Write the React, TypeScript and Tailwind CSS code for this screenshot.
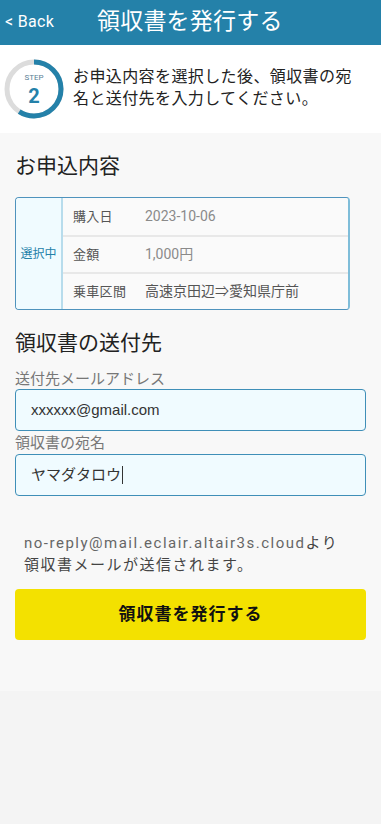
import React from 'react';

const font = { fontFamily: "Roboto, 'Noto Sans CJK JP', sans-serif" };

const rows = [
  { label: '購入日', value: '2023-10-06', dark: false },
  { label: '金額', value: '1,000円', dark: false },
  { label: '乗車区間', value: '高速京田辺⇒愛知県庁前', dark: true },
];

function StepBadge() {
  const r = 27;
  const c = 2 * Math.PI * r;
  return (
    <div className="relative w-[60px] h-[60px] shrink-0">
      <svg width="60" height="60" viewBox="0 0 60 60">
        <circle cx="30" cy="30" r={r} fill="none" stroke="#dcdcdc" strokeWidth="5" />
        <circle
          cx="30"
          cy="30"
          r={r}
          fill="none"
          stroke="#2481a9"
          strokeWidth="5"
          strokeDasharray={`${c * 0.59} ${c}`}
          transform="rotate(-90 30 30)"
        />
      </svg>
      <div className="absolute inset-0 flex flex-col items-center justify-center">
        <span className="text-[8px] leading-none text-[#5a7f95] mt-[2px]">STEP</span>
        <span className="text-[20px] leading-none font-bold text-[#2481a9] mt-[4px]">2</span>
      </div>
    </div>
  );
}

export default function App() {
  return (
    <div className="min-h-[824px] w-[381px] bg-[#f4f4f4]" style={font}>
      {/* Header */}
      <div className="h-[45px] bg-[#2481a9] flex items-center relative">
        <span className="absolute left-[5px] top-[12px] text-[16px] leading-[20px] text-white tracking-[0.3px]">&lt; Back</span>
        <h1 className="ml-[97px] text-[23px] leading-[30px] text-white tracking-[0.2px] mt-[-2px]">
          領収書を発行する
        </h1>
      </div>

      {/* Step */}
      <div className="bg-white h-[88px] flex items-center pl-[4px]">
        <StepBadge />
        <p className="ml-[9px] w-[288px] text-[16px] leading-[22px] text-[#222] tracking-[0.4px] mt-[-2px]">
          お申込内容を選択した後、領収書の宛名と送付先を入力してください。
        </p>
      </div>

      {/* Form */}
      <div className="bg-[#f8f8f8] px-[15px] pt-[20px] pb-[51px]">
        <h2 className="text-[21px] leading-[26px] text-[#222]">お申込内容</h2>

        <div className="mt-[18px] w-[335px] border border-[#4f93bd] border-r-2 border-r-[#7fbdd9] rounded-[4px] flex overflow-hidden">
          <div className="w-[47px] bg-[#f0fbff] border-r-2 border-[#b8dcec] flex items-center justify-center">
            <span className="text-[12px] text-[#2481a9]">選択中</span>
          </div>
          <div className="flex-1 bg-[#fafafa]">
            {rows.map((row, i) => (
              <div
                key={i}
                className={`h-[37px] flex items-center pl-[10px] ${i > 0 ? 'border-t-2 border-[#e8e8e8]' : ''}`}
              >
                <span className="w-[72px] text-[13px] tracking-[0.3px] text-[#555]">{row.label}</span>
                <span className={`text-[14px] ${row.dark ? 'text-[#555]' : 'text-[#8a8a8a]'}`}>{row.value}</span>
              </div>
            ))}
          </div>
        </div>

        <h2 className="mt-[20px] text-[21px] leading-[26px] text-[#222]">領収書の送付先</h2>

        <label className="block mt-[13px] text-[15px] leading-[20px] text-[#777]">送付先メールアドレス</label>
        <div className="h-[42px] border border-[#3f8fb8] rounded-[4px] bg-[#f0fbff] flex items-center pl-[15px]">
          <span className="text-[15px] text-[#333]" style={{ fontFamily: "'Liberation Sans', Arial, sans-serif" }}>
            xxxxxx@gmail.com
          </span>
        </div>

        <label className="block mt-[2px] text-[15px] leading-[21px] text-[#777]">領収書の宛名</label>
        <div className="h-[42px] border border-[#3f8fb8] rounded-[4px] bg-[#f0fbff] flex items-center pl-[15px]">
          <span className="text-[15px] text-[#333]">ヤマダタロウ</span>
          <span className="w-px h-[18px] bg-[#333] ml-[1px]" />
        </div>

        <p className="mt-[36px] px-[9px] text-[15px] leading-[22px] text-[#444] tracking-[1.5px]">
          <span className="text-[#666]">no-reply@mail.eclair.altair3s.cloud</span>より
          <br />
          領収書メールが送信されます。
        </p>

        <button className="mt-[13px] w-full h-[51px] bg-[#f3e100] rounded-[4px] text-[17px] font-bold text-[#111] tracking-[1px]">
          領収書を発行する
        </button>
      </div>
    </div>
  );
}
